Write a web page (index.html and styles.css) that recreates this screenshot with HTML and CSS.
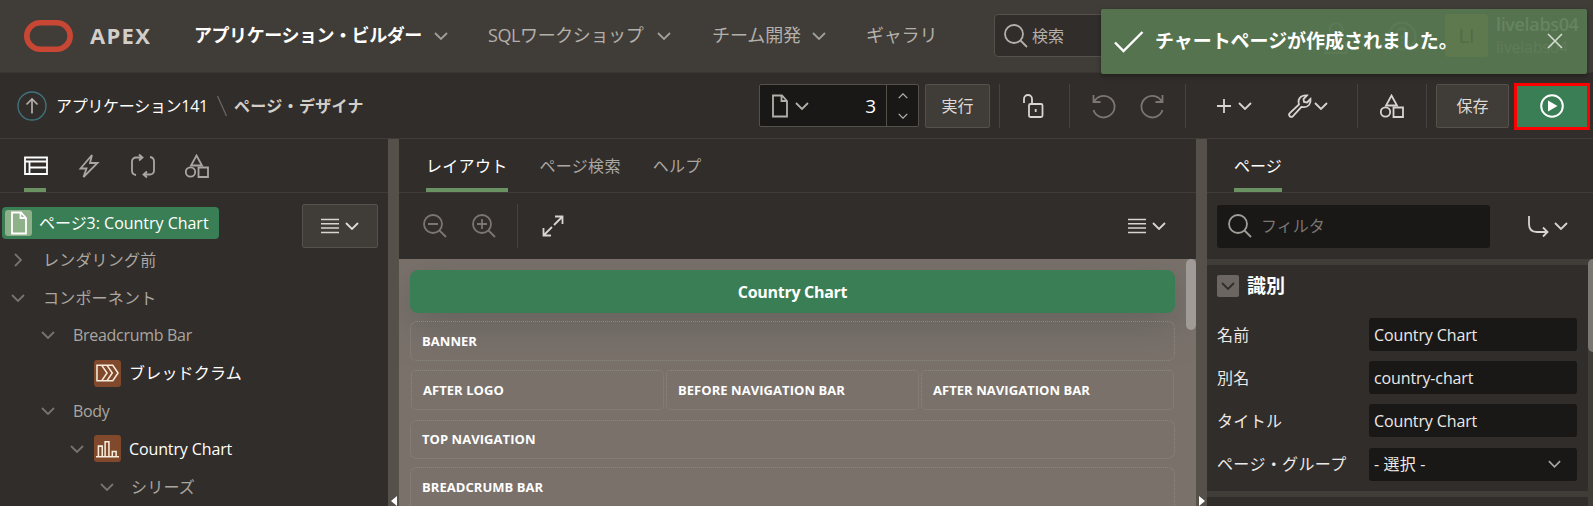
FILE: index.html
```html
<!DOCTYPE html>
<html lang="ja">
<head>
<meta charset="utf-8">
<title>ページ・デザイナ</title>
<link rel="stylesheet" href="styles.css">
</head>
<body>
<svg class="defs" width="0" height="0">
  <symbol id="chev" viewBox="0 0 14 8"><path d="M1 1l6 6 6-6"/></symbol>
  <symbol id="shapes" viewBox="0 0 24 24"><path d="M11.500 1.500l5.500 10H6z"/><circle cx="5.500" cy="18" r="4.700"/><path d="M13.500 13.500h9.500v9.500h-9.500z"/></symbol>
  <symbol id="mag" viewBox="0 0 24 24"><circle cx="10" cy="10" r="9"/><path d="M16.500 16.500l6.500 6.500"/></symbol>
  <symbol id="page" viewBox="0 0 18 24"><path d="M2 1.500h9l5 5.500v15.500H2zM10.500 1.500V7h5.500"/></symbol>
  <symbol id="lines" viewBox="0 0 18 16"><path d="M0 1.500h18M0 5.800h18M0 10.100h18M0 14.500h18"/></symbol>
</svg>

<header class="topbar">
  <svg class="logo" viewBox="0 0 49 32"><rect x="2.800" y="2.800" width="43.400" height="26.400" rx="13.200"/></svg>
  <span class="brand">APEX</span>
  <nav class="nav">
    <a class="nav-a active">アプリケーション・ビルダー</a><svg class="ic chev"><use href="#chev"/></svg>
    <a class="nav-b">SQLワークショップ</a><svg class="ic chev"><use href="#chev"/></svg>
    <a class="nav-c">チーム開発</a><svg class="ic chev"><use href="#chev"/></svg>
    <a class="nav-d">ギャラリ</a>
  </nav>
  <div class="search"><svg class="ic s24"><use href="#mag"/></svg><span>検索</span></div>
</header>

<div class="toast">
  <svg class="toast-check" viewBox="0 0 30 22"><path d="M1 11.500l8.500 8.500L28.500 1"/></svg>
  <strong>チャートページが作成されました。</strong>
  <svg class="ghost g-user" viewBox="0 0 24 32"><circle cx="12" cy="8" r="6"/><path d="M2 30v-5q0-7 10-7t10 7v5z"/></svg>
  <svg class="ghost g-help" viewBox="0 0 28 28"><circle cx="14" cy="14" r="12.500"/><path d="M10 11q0-4 4-4t4 4q0 2-4 4v2M14 19v2"/></svg>
  <span class="avatar">LI</span>
  <div class="user"><b>livelabs04</b><span>livelabs04</span></div>
  <svg class="toast-x" viewBox="0 0 16 16"><path d="M1 1l14 14M15 1L1 15"/></svg>
</div>

<div class="toolbar">
  <svg class="up" viewBox="0 0 30 30"><circle cx="15" cy="15" r="14"/><path d="M15 22.500V8.500M9.500 13.500L15 8l5.500 5.500"/></svg>
  <span class="crumb">アプリケーション141</span>
  <svg class="slash" viewBox="0 0 12 22"><path d="M1.500 1l9 20"/></svg>
  <span class="crumb-now">ページ・デザイナ</span>
  <div class="pagebox">
    <svg class="ic pg"><use href="#page"/></svg><svg class="ic chev"><use href="#chev"/></svg>
    <span class="num">3</span>
    <div class="spin"><svg class="ic flip"><use href="#chev"/></svg><svg class="ic"><use href="#chev"/></svg></div>
  </div>
  <div class="btn go">実行</div>
  <i class="sep sep1"></i>
  <svg class="ic s24 lock" viewBox="0 0 24 24"><rect x="6" y="10" width="13.500" height="13" rx="1.500"/><path d="M1 9V5a4 4 0 0 1 8 0v5M12.700 15v3"/></svg>
  <i class="sep sep2"></i>
  <svg class="ic s24 dim undo" viewBox="0 0 24 24"><path d="M1.500 1v7H8.500M2 8A10.800 10.800 0 1 1 1.500 16"/></svg>
  <svg class="ic s24 dim redo" viewBox="0 0 24 24"><path d="M22.500 1v7H15.500M22 8A10.800 10.800 0 1 0 22.500 16"/></svg>
  <i class="sep sep3"></i>
  <svg class="ic plus" viewBox="0 0 16 16"><path d="M8 1v14M1 8h14"/></svg><svg class="ic chev plus-c"><use href="#chev"/></svg>
  <svg class="ic s24 wrench" viewBox="0 0 24 24"><path d="M1.800 19.200L11 10.500Q9.500 5.500 13 2.800 15.500 1 19 1.500L15.500 5l.5 3 3 .5 3.500-3.500Q23 8.500 21 11q-2.800 3-7.500 1.800L5 22.200q-1.800 1.300-3.300 0-1.300-1.500.1-3z"/></svg><svg class="ic chev wr-c"><use href="#chev"/></svg>
  <i class="sep sep4"></i>
  <svg class="ic s24 shp"><use href="#shapes"/></svg>
  <i class="sep sep5"></i>
  <div class="btn save">保存</div>
  <div class="run"><svg viewBox="0 0 24 24"><circle cx="12" cy="12" r="10.800"/><path d="M8 6.500v11l9.500-5.500z"/></svg></div>
</div>

<main class="work">
  <section class="left">
    <div class="tabs ltabs">
      <div class="tab on"><svg class="ic s24" viewBox="0 0 24 24"><path d="M1 3.500h22v16.500H1zM1 7.500h22M5.500 7.500V20M5.500 13.500H23"/></svg></div>
      <svg class="ic s24 t2" viewBox="0 0 24 24"><path d="M15 1L3.500 14.500h6L6.500 23 20.500 9H13z"/></svg>
      <svg class="ic s24 t3" viewBox="0 0 24 24"><path d="M11 3.500H5a4 4 0 0 0-4 4v9q0 4 4 4.500M8 .5l3.500 3-3.500 3M13 20.500h6a4 4 0 0 0 4-4v-9q0-4-4-4.500M16 23.500l-3.500-3 3.500-3"/></svg>
      <svg class="ic s24 t4"><use href="#shapes"/></svg>
    </div>
    <div class="tree">
      <div class="treetop">
        <div class="sel"><span class="selic"><svg class="ic pg"><use href="#page"/></svg></span><span>ページ3: Country Chart</span></div>
        <div class="btn menu"><svg class="lines"><use href="#lines"/></svg><svg class="ic chev"><use href="#chev"/></svg></div>
      </div>
      <div class="row r1"><svg class="ic chev right"><use href="#chev"/></svg><span>レンダリング前</span></div>
      <div class="row r1"><svg class="ic chev"><use href="#chev"/></svg><span>コンポーネント</span></div>
      <div class="row r2"><svg class="ic chev"><use href="#chev"/></svg><span class="latin">Breadcrumb Bar</span></div>
      <div class="row r3"><b class="node"><svg viewBox="0 0 24 18"><path d="M1 1h16.500L23 9l-5.500 8H1zM6 1l5.500 8L6 17M11.500 1L17 9l-5.500 8"/></svg></b><span class="lit">ブレッドクラム</span></div>
      <div class="row r2"><svg class="ic chev"><use href="#chev"/></svg><span class="latin">Body</span></div>
      <div class="row r4"><svg class="ic chev"><use href="#chev"/></svg><b class="node"><svg viewBox="0 0 24 18"><path d="M0 17h24M2.500 17V6h4v11M9.500 17V1.500h4V17M17 17v-5.500h4V17"/></svg></b><span class="lit cc">Country Chart</span></div>
      <div class="row r5"><svg class="ic chev"><use href="#chev"/></svg><span>シリーズ</span></div>
    </div>
  </section>
  <div class="split"><svg class="tri" viewBox="0 0 6 10"><path d="M6 0v10L0 5z"/></svg></div>
  <section class="mid">
    <div class="tabs mtabs"><div class="tab on">レイアウト</div><div class="tab">ページ検索</div><div class="tab">ヘルプ</div></div>
    <div class="midbar">
      <svg class="ic s24 dim" viewBox="0 0 24 24"><circle cx="10" cy="10" r="9"/><path d="M16.500 16.500l6.500 6.500M5 10h10"/></svg>
      <svg class="ic s24 dim zin" viewBox="0 0 24 24"><circle cx="10" cy="10" r="9"/><path d="M16.500 16.500l6.500 6.500M5 10h10M10 5v10"/></svg>
      <i class="sep"></i>
      <svg class="ic expand" viewBox="0 0 22 22"><path d="M13 1.500h7.500V9M20 2l-8 8M1.500 13v7.500H9M2 20l8-8"/></svg>
      <svg class="lines"><use href="#lines"/></svg><svg class="ic chev"><use href="#chev"/></svg>
    </div>
    <div class="canvas">
      <div class="blocks">
        <div class="head">Country Chart</div>
        <div class="slot s1">BANNER</div>
        <div class="trio"><div class="slot">AFTER LOGO</div><div class="slot">BEFORE NAVIGATION BAR</div><div class="slot">AFTER NAVIGATION BAR</div></div>
        <div class="slot s3">TOP NAVIGATION</div>
        <div class="slot s4">BREADCRUMB BAR</div>
      </div>
      <div class="thumb"></div>
    </div>
  </section>
  <div class="split"><svg class="tri" viewBox="0 0 6 10"><path d="M0 0v10l6-5z"/></svg></div>
  <section class="rightp">
    <div class="tabs rtabs"><div class="tab on">ページ</div></div>
    <div class="filterbar">
      <div class="filter"><svg class="ic s24"><use href="#mag"/></svg><span>フィルタ</span></div>
      <svg class="ic ret" viewBox="0 0 21 21"><path d="M1 0v8q0 8 8 8h10M15 11.500l4.500 4.500-4.500 4.500"/></svg><svg class="ic chev"><use href="#chev"/></svg>
    </div>
    <div class="props">
      <div class="proplist">
        <div class="group">
          <div class="ghead"><span class="box"><svg class="ic chev"><use href="#chev"/></svg></span><span class="gtitle">識別</span></div>
          <div class="prop"><label>名前</label><div class="field">Country Chart</div></div>
          <div class="prop"><label>別名</label><div class="field">country-chart</div></div>
          <div class="prop"><label>タイトル</label><div class="field">Country Chart</div></div>
          <div class="prop"><label>ページ・グループ</label><div class="field select"><span>- 選択 -</span><svg class="ic chev"><use href="#chev"/></svg></div></div>
        </div>
        <div class="group next"></div>
      </div>
      <div class="gutter"><div class="thumb2"></div></div>
    </div>
  </section>
</main>
</body>
</html>
```
FILE: styles.css
```css
* { box-sizing: border-box; }
body {
  margin: 0; width: 1593px; height: 506px; overflow: hidden; position: relative;
  background: #312d2a; color: #aaa6a1;
  font: 16px/24px "Open Sans", "Noto Sans CJK JP", sans-serif; white-space: nowrap;
}
.defs { position: absolute; }
svg { display: block; flex: none; overflow: visible; }
.ic { fill: none; stroke: currentColor; stroke-width: 1.8; }
.chev { width: 14px; height: 8px; }
.s24 { width: 24px; height: 24px; }
.pg { width: 18px; height: 24px; }
.lines { width: 18px; height: 16px; stroke: #d8d4d0; stroke-width: 1.5; }
.dim { color: #7b7671; }
.sep { width: 1px; height: 44px; background: #474340; flex: none; }
.btn { background: #403c38; border: 1px solid #54504a; border-radius: 2px; height: 44px; display: flex; align-items: center; justify-content: center; color: #dedad6; flex: none; }

.topbar { height: 73px; background: #403c38; border-bottom: 1px solid #393531; display: flex; align-items: center; padding: 0 0 1px 24px; }
.logo { width: 49px; height: 32px; fill: none; stroke: #c74634; stroke-width: 5.6; }
.brand { margin-left: 17px; width: 104px; font-size: 22px; font-weight: 700; color: #d2cfcb; letter-spacing: 1.3px; position: relative; top: -1px; }
.nav { display: flex; align-items: center; width: 800px; font-size: 18px; color: #b3afaa; }
.nav a { position: relative; top: -1px; }
.nav .chev { color: #a19d98; }
.nav-a { width: 240px; letter-spacing: -.45px; }
.nav-b { width: 169px; margin-left: 40px; letter-spacing: -.4px; }
.nav-c { width: 100px; margin-left: 41px; letter-spacing: -.1px; }
.nav-d { margin-left: 40px; letter-spacing: -.2px; }
.active { font-weight: 700; color: #fff; }
.search { width: 275px; height: 43px; border: 1px solid #54504a; border-radius: 4px; background: #312d2a; display: flex; align-items: center; gap: 4px; padding-left: 9px; color: #b3afaa; }

.toast { position: absolute; z-index: 5; left: 1101px; top: 9px; width: 486px; height: 65px; border-radius: 2px; background: #56734f; box-shadow: 0 2px 5px rgba(0,0,0,.35); color: #fff; display: flex; align-items: center; padding-left: 13px; }
.toast-check { width: 30px; height: 22px; fill: none; stroke: #fff; stroke-width: 2.4; }
.toast strong { position: relative; top: -1px; z-index: 1; margin-left: 11px; font-size: 19px; width: 300px; letter-spacing: -.05px; }
.ghost { position: absolute; fill: none; stroke: #5c7956; stroke-width: 2.3; }
.g-user { left: 222px; top: 12px; width: 26px; height: 34px; }
.g-help { left: 286px; top: 12px; width: 30px; height: 30px; }
.avatar { position: absolute; left: 344px; top: 5px; width: 43px; height: 43px; border-radius: 3px; background: #5e794e; color: #536b46; font-size: 20px; line-height: 43px; text-align: center; }
.user { position: absolute; left: 395px; top: 3px; color: #66845f; display: flex; flex-direction: column; }
.user b { font-size: 18px; font-weight: 600; line-height: 24px; letter-spacing: -.35px; }
.user span { font-size: 16px; line-height: 22px; color: #5f7c58; letter-spacing: -.2px; }
.toast-x { position: absolute; left: 446px; top: 24px; width: 16px; height: 16px; stroke: #d3dccf; stroke-width: 1.6; }

.toolbar { height: 66px; border-bottom: 1px solid #403c38; display: flex; align-items: center; padding-left: 17px; color: #d8d4d0; }
.up { width: 30px; height: 30px; fill: none; stroke: #b3afaa; stroke-width: 1.7; }
.up circle { stroke: #41717c; stroke-width: 1.4; }
.crumb { margin-left: 9px; width: 160px; color: #fff; letter-spacing: -.3px; }
.slash { width: 12px; height: 22px; stroke: #6e6964; stroke-width: 1.2; fill: none; }
.crumb-now { margin-left: 6px; width: 525px; font-weight: 700; color: #d2cfcb; letter-spacing: .3px; }
.pagebox { width: 160px; height: 43px; background: #191816; border: 1px solid #54504a; border-radius: 2px; display: flex; align-items: center; padding-left: 11px; flex: none; color: #b3afaa; }
.pagebox > .chev { margin-left: 6px; }
.num { width: 67px; text-align: right; color: #fff; font-size: 19px; }
.spin { margin-left: 10px; width: 32px; height: 41px; border-left: 1px solid #54504a; display: flex; flex-direction: column; justify-content: center; align-items: center; gap: 14px; }
.spin svg { width: 10px; height: 6px; }
.flip { transform: scaleY(-1); }
.go { margin-left: 6px; width: 65px; }
.sep1 { margin-left: 9px; } .lock { margin-left: 23px; } .sep2 { margin-left: 22px; }
.undo { margin-left: 22px; } .redo { margin-left: 24px; } .sep3 { margin-left: 21px; }
.plus { width: 16px; height: 16px; margin-left: 30px; } .plus-c { margin-left: 6px; }
.wrench { margin-left: 36px; } .wr-c { margin-left: 2px; }
.sep4 { margin-left: 29px; } .shp { margin-left: 22px; } .sep5 { margin-left: 22px; }
.save { margin-left: 9px; width: 73px; }
.run { margin-left: 5px; width: 76px; height: 47px; border: 3px solid #f00; background: #397e54; display: flex; align-items: center; justify-content: center; flex: none; margin-top: 1px; }
.run svg { width: 24px; height: 24px; margin-right: 1px; fill: none; stroke: #fff; stroke-width: 2; }
.run path { fill: #fff; stroke: none; }

.work { display: flex; height: 367px; }
.left { width: 388px; }
.split { width: 11px; background: #55504a; display: flex; align-items: flex-end; justify-content: center; }
.tri { width: 6px; height: 10px; fill: #fff; }
.tabs { height: 54px; border-bottom: 1px solid #403c38; display: flex; }
.tab { height: 53px; display: flex; align-items: center; color: #aaa6a1; letter-spacing: .3px; }
.tab.on { color: #fff; border-bottom: 4px solid #6b9263; padding-top: 4px; }
.ltabs { padding-left: 24px; align-items: center; color: #aaa6a1; }
.ltabs .tab { width: 22px; } .t2 { margin-left: 31px; } .t3 { margin-left: 30px; } .t4 { margin-left: 30px; }
.tree { padding: 11px 0 0 0; }
.treetop { display: flex; padding-left: 2px; height: 37px; }
.sel { margin-top: 3px; width: 217px; height: 32px; border-radius: 4px; background: #397e54; color: #fff; display: flex; align-items: center; gap: 7px; padding-left: 3px; letter-spacing: -.02px; }
.selic { width: 27px; height: 26px; background: #8fb18a; border-radius: 3px; display: flex; justify-content: center; align-items: center; }
.menu { margin-left: 83px; width: 76px; gap: 6px; }
.row { height: 37.8px; display: flex; align-items: center; letter-spacing: .2px; }
.row > .chev { color: #77736e; }
.right { transform: rotate(-90deg); }
.row span { margin-left: 18px; }
.row .latin { letter-spacing: -.3px; }
.r1 { padding-left: 11px; } .r2 { padding-left: 41px; } .r3 { padding-left: 94px; } .r4 { padding-left: 70px; } .r5 { padding-left: 100px; }
.row .lit { color: #fff; margin-left: 8px; }
.row .cc, .field { letter-spacing: -.12px; }
.r5 span { margin-left: 17px; }
.node { width: 27px; height: 27px; border-radius: 3px; background: #80492c; display: flex; align-items: center; justify-content: center; }
.r4 .node { margin-left: 10px; }
.node svg { width: 23px; height: 18px; fill: none; stroke: #f5ecdc; stroke-width: 1.6; }

.mid { width: 797px; }
.mtabs { padding-left: 27px; gap: 32px; }
.midbar { height: 66px; display: flex; align-items: center; padding-left: 24px; color: #d8d4d0; }
.zin { margin-left: 25px; } .midbar .sep { margin-left: 21px; } .expand { width: 22px; height: 22px; margin-left: 24px; }
.midbar .lines { margin-left: 564px; } .midbar .chev { margin-left: 6px; }
.canvas { height: 247px; background: #7a716b; display: flex; overflow: hidden; }
.blocks { width: 765px; margin: 11px 11px 0; color: #fff; font-weight: 700; }
.head { height: 43px; border-radius: 8px; background: #397e54; text-align: center; line-height: 44px; font-size: 16px; letter-spacing: -.3px; box-shadow: 0 12px 36px rgba(80,88,82,.5); }
.slot { height: 40px; border: 1px dotted #8b8781; border-radius: 7px; padding-left: 11px; line-height: 39px; font-size: 13px; letter-spacing: .05px; }
.s1 { margin-top: 8px; } .trio { margin: 9px 1px 0; display: grid; grid-template-columns: repeat(3, 253px); gap: 2px; }
.trio .slot { border-radius: 5px; } .s3 { margin-top: 10px; height: 39px; line-height: 37px; } .s4 { margin-top: 8px; height: 60px; }
.thumb { width: 10px; height: 71px; border-radius: 5px; background: #a09b96; }

.rightp { width: 386px; }
.rtabs { padding-left: 27px; }
.rtabs .tab { letter-spacing: 0; }
.filterbar { height: 66px; display: flex; align-items: center; padding-left: 10px; color: #d8d4d0; }
.filter { width: 273px; height: 43px; border-radius: 3px; background: #191816; display: flex; align-items: center; gap: 9px; padding-left: 11px; color: #7b7671; }
.filter svg { color: #a19d98; }
.ret { width: 21px; height: 21px; margin-left: 38px; } .filterbar .chev { margin-left: 5px; }
.props { display: flex; height: 247px; }
.proplist { width: 381px; }
.group { height: 232px; border-top: 6px solid #403c38; padding: 10px 11px 0 10px; color: #ece9e6; }
.ghead { display: flex; align-items: center; gap: 8px; height: 22px; margin-bottom: 21px; }
.box { width: 22px; height: 22px; border-radius: 2px; background: #6b6661; color: #312d2a; display: flex; align-items: center; justify-content: center; }
.gtitle { color: #fff; font-size: 19px; font-weight: 700; }
.prop { display: flex; align-items: center; height: 33px; margin-bottom: 10.2px; }
.prop label { width: 152px; letter-spacing: .35px; }
.field { width: 208px; height: 33px; border-radius: 3px; background: #191816; padding-left: 5px; line-height: 34px; }
.select { display: flex; align-items: center; justify-content: space-between; padding-right: 16px; letter-spacing: .15px; }
.select svg { width: 13px; color: #aaa6a1; }
.next { height: 15px; }
.gutter { width: 5px; background: #403c38; overflow: hidden; }
.thumb2 { width: 10px; height: 93px; border-radius: 5px; background: #7a7672; }
```
